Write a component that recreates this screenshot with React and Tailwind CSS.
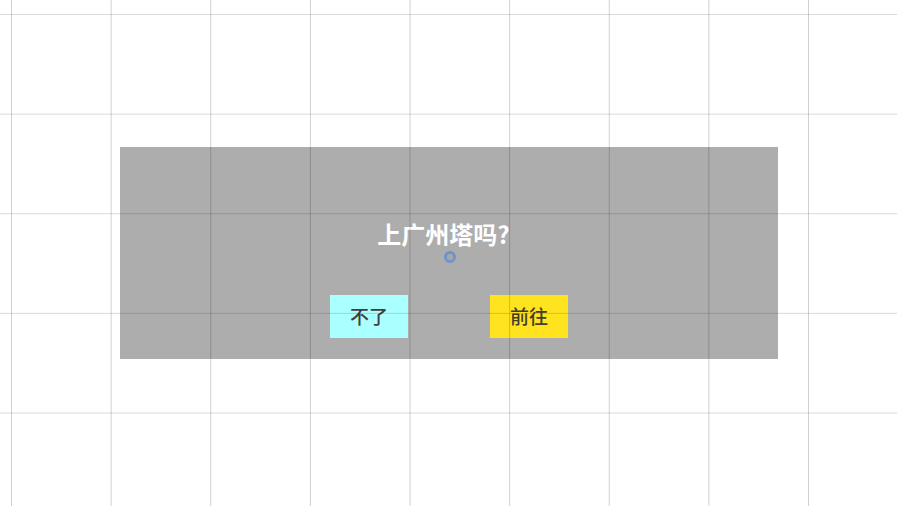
import React from 'react';

const App = () => {
  return (
    <div
      className="relative w-full h-[506px] overflow-hidden bg-white"
      style={{ fontFamily: '"Noto Sans CJK SC", "Noto Sans", sans-serif' }}
    >
      {/* dialog */}
      <div className="ml-[120px] mt-[147px] w-[658px] h-[212px] bg-[#adadad] flex flex-col items-center pt-[71px]">
        <div className="mr-[11px] h-[32px] leading-[32px] text-[24px] font-bold text-white">上广州塔吗?</div>
        <svg width="14" height="14" viewBox="0 0 14 14" className="mt-0 ml-[2px]">
          <circle cx="7" cy="7" r="4.6" fill="#a3a8ae" stroke="#6f93c6" strokeWidth="2.8" />
        </svg>
        <div className="mt-[31px] flex gap-[82px]">
          <button className="w-[78px] h-[43px] bg-[#aaffff] text-[19px] font-medium text-[#3f3f3f] flex items-center justify-center">
            不了
          </button>
          <button className="w-[78px] h-[43px] bg-[#ffe31f] text-[19px] font-medium text-[#433e2a] flex items-center justify-center">
            前往
          </button>
        </div>
      </div>
      {/* debug grid drawn over everything */}
      <div className="pointer-events-none absolute inset-0 bg-[linear-gradient(to_right,rgba(0,0,0,0.18)_1px,transparent_1px),linear-gradient(to_bottom,rgba(0,0,0,0.15)_1px,transparent_1px)] bg-[length:99.625px_99.625px] bg-[position:11px_14px]" />
    </div>
  );
};

export default App;
